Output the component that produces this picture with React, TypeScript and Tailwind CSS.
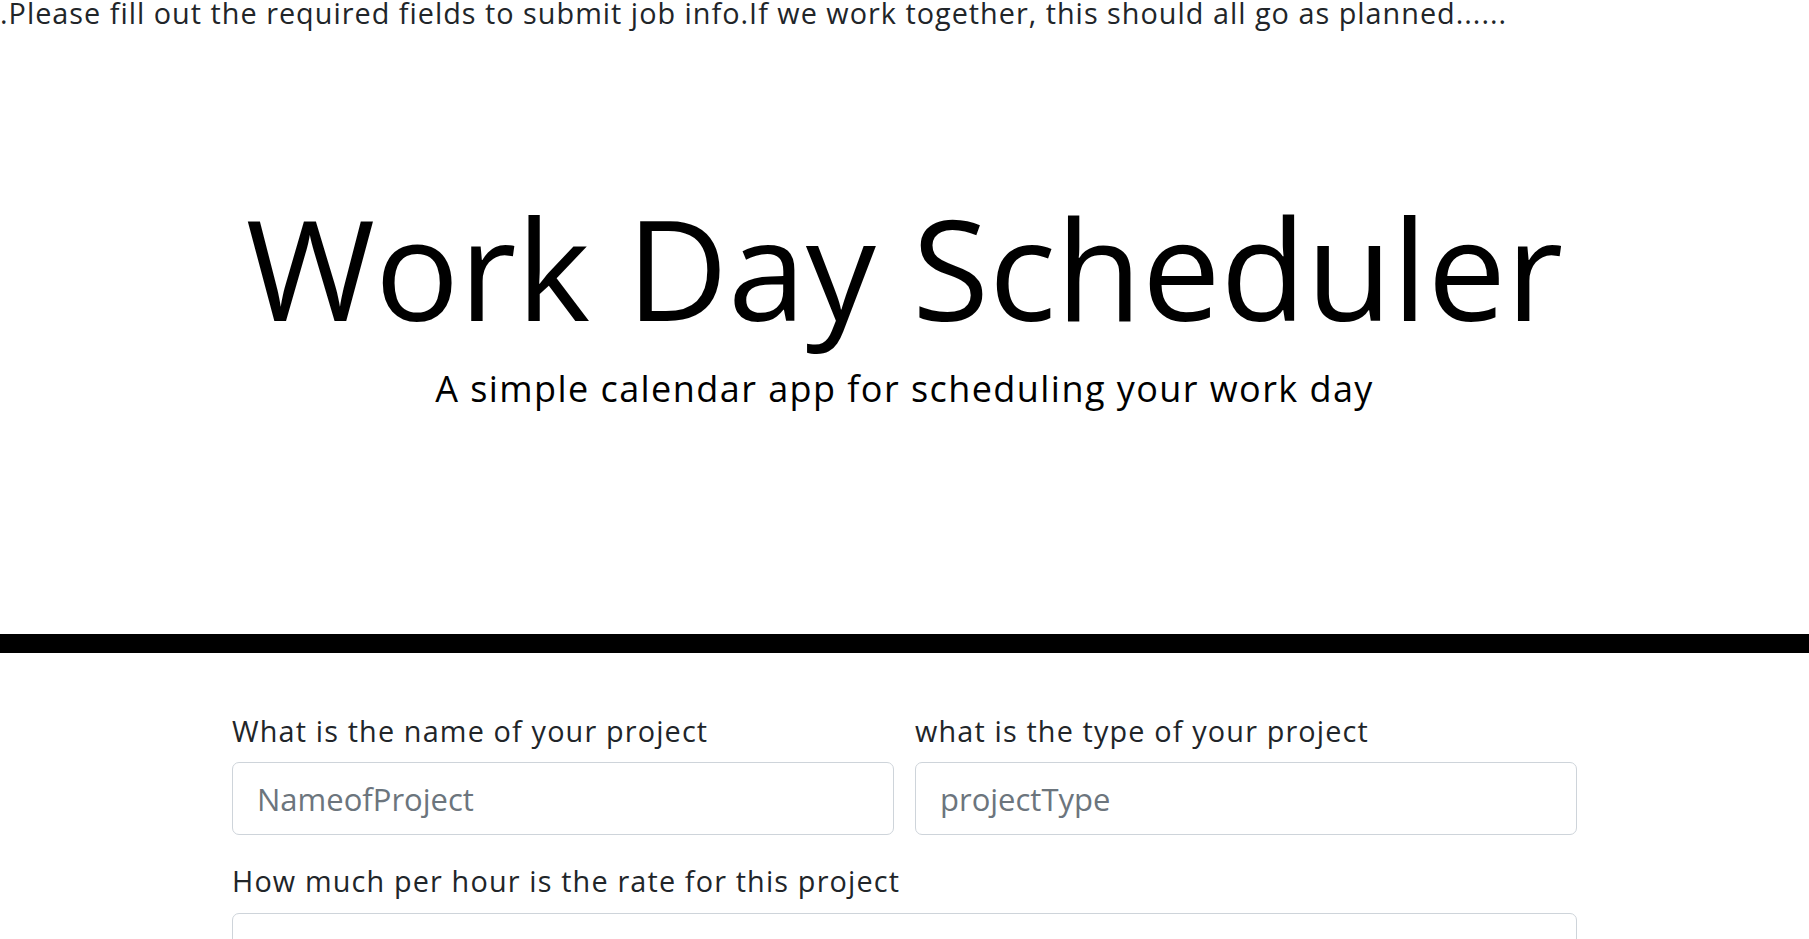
export default function App() {
  return (
    <div className="min-h-screen bg-white text-[#212529] overflow-hidden" style={{ fontFamily: '"Open Sans", "Noto Sans", sans-serif' }}>
      {/* page is scrolled a little, so the intro line is cut at the top */}
      <p className="-mt-[9px] text-[28.8px] leading-[43.2px] tracking-[0.035em] whitespace-nowrap">
        .Please fill out the required fields to submit job info.If we work together, this should all go as planned......
      </p>

      <header className="pt-[149px] pb-[218px] text-center text-black">
        <h1 className="text-[140px] leading-[168px] font-normal">Work Day Scheduler</h1>
        <p className="mt-[11px] text-[36px] leading-[54px] tracking-[0.04em]">A simple calendar app for scheduling your work day</p>
      </header>

      <div className="h-[19px] bg-black" />

      <form className="mx-auto w-[1345px] pt-[56px]">
        <div className="grid grid-cols-2 gap-x-[21px]">
          <div className="mb-[24px]">
            <label className="block mb-[10px] text-[28.8px] leading-[43.2px] tracking-[0.04em]">What is the name of your project</label>
            <input
              placeholder="NameofProject"
              className="block w-full h-[73px] px-[24px] rounded-[7px] border border-[#ced4da] bg-white text-[31px] text-[#495057] placeholder:text-[#6c757d] outline-none"
            />
          </div>
          <div className="mb-[24px]">
            <label className="block mb-[10px] text-[28.8px] leading-[43.2px] tracking-[0.04em]">what is the type of your project</label>
            <input
              placeholder="projectType"
              className="block w-full h-[73px] px-[24px] rounded-[7px] border border-[#ced4da] bg-white text-[31px] text-[#495057] placeholder:text-[#6c757d] outline-none"
            />
          </div>
        </div>
        <div className="mb-[24px]">
          <label className="block mb-[10px] text-[28.8px] leading-[43.2px] tracking-[0.04em]">How much per hour is the rate for this project</label>
          <input className="block w-full h-[73px] px-[24px] rounded-[7px] border border-[#ced4da] bg-white text-[31px] text-[#495057] outline-none" />
        </div>
      </form>
    </div>
  );
}
